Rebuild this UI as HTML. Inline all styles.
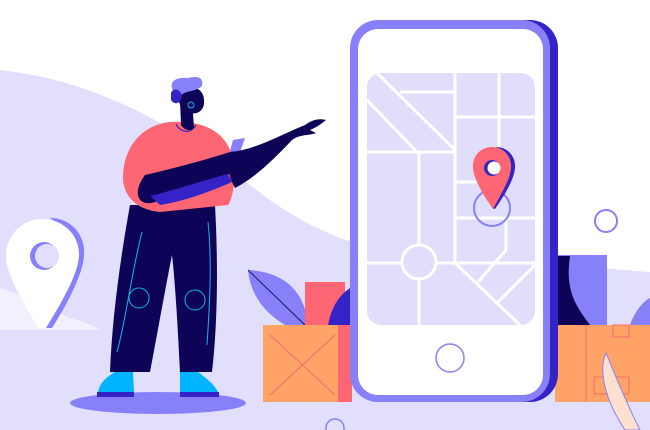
<!DOCTYPE html>
<html><head><meta charset="utf-8"><style>html,body{margin:0;padding:0;background:#fff;overflow:hidden}svg{display:block}</style></head><body>
<svg width="650" height="430" viewBox="0 0 650 430" xmlns="http://www.w3.org/2000/svg">
<rect width="650" height="430" fill="#fff"/>
<path d="M0 70 C90 80 170 120 250 185 C300 225 340 240 380 250 L650 272 L650 430 L0 430 Z" fill="#e1dffb"/>
<!-- left pin -->
<path d="M0 288 C30 298 60 312 70 318 C85 322 95 326 100 330 L0 330 Z" fill="#f1f0fd"/>
<path d="M50 218 C72 218 86 236 84 256 C83 272 70 300 52 328 L44 328 C60 300 72 272 72 256 C72 240 62 226 50 218 Z" fill="#8780f8"/>
<path d="M42 219 C64 219 80 236 79 256 C78 274 62 302 46 328 L38 328 C22 300 6 274 6 256 C6 236 22 219 42 219 Z" fill="#fff"/>
<circle cx="44" cy="256" r="14" fill="#8780f8"/><circle cx="47" cy="256" r="12" fill="#e1dffb"/>
<!-- leaf & boxes left -->
<path d="M248 270 C285 272 305 292 308 325 L285 325 C260 310 250 290 248 270 Z" fill="#8780f8"/>
<line x1="248" y1="270" x2="305" y2="325" stroke="#1c1660" stroke-width="1"/>
<rect x="305" y="282" width="40" height="44" fill="#ff6673"/>
<path d="M328 325 C332 305 340 295 350 288 L350 325 Z" fill="#3424c8"/>
<rect x="263" y="325" width="80" height="77" fill="#ffa466"/>
<path d="M270 335 L335 395 M335 335 L270 395" stroke="#ff6673" stroke-width="1"/>
<rect x="338" y="325" width="14" height="77" fill="#ff6673"/>
<!-- right side plants & box -->
<rect x="555" y="255" width="52" height="72" fill="#8780f8"/>
<path d="M555 256 L570 256 C565 290 575 305 590 325 L555 325 Z" fill="#0d0457"/>
<path d="M630 325 C635 310 645 300 650 298 L650 325 Z" fill="#8780f8"/>
<rect x="555" y="325" width="95" height="77" fill="#ffa466"/>
<line x1="586" y1="325" x2="586" y2="402" stroke="#ff6673" stroke-width="1"/>
<rect x="613" y="325" width="16" height="12" fill="none" stroke="#ff6673" stroke-width="1"/>
<rect x="594" y="377" width="35" height="17" fill="none" stroke="#ff6673" stroke-width="1"/>
<path d="M606 353 C598 370 605 400 625 430 L640 430 C625 400 615 375 606 353 Z" fill="#fde0d0" stroke="#8780f8" stroke-width="1"/>
<circle cx="606" cy="221" r="11" fill="none" stroke="#8780f8" stroke-width="2"/>
<!-- phone -->
<rect x="354" y="20" width="204" height="382" rx="28" fill="#3424c8"/>
<rect x="350" y="20" width="200" height="382" rx="28" fill="#8780f8"/>
<rect x="358" y="29" width="185" height="366" rx="20" fill="#fff"/>
<rect x="367" y="73" width="168" height="252" rx="14" fill="#e0defb"/>
<g stroke="#fff" stroke-width="3" fill="none">
<path d="M455 73 V263"/>
<path d="M499 73 V182"/>
<path d="M455 117 H535"/>
<path d="M400 92 H455"/>
<path d="M377 73 L455 150"/>
<path d="M367 100 L417 152"/>
<path d="M367 152 H455"/>
<path d="M419 152 V325"/>
<path d="M455 182 H499"/>
<path d="M455 218 H535"/>
<path d="M506 218 V250 L478 282"/>
<path d="M535 265 L497 303"/>
<path d="M367 263 H535"/>
<path d="M455 263 L520 325"/>
</g>
<circle cx="419" cy="262" r="17" fill="#e0defb" stroke="#fff" stroke-width="3"/>
<circle cx="492" cy="208" r="18" fill="none" stroke="#8780f8" stroke-width="2"/>
<path d="M496 147 C508 147 516 157 515 168 C514 180 504 196 495 209 L492 208 C500 194 508 180 508 168 Z" fill="#3424c8"/>
<path d="M492 147 C504 147 512 157 511 168 C510 180 500 196 493 209 C484 196 474 180 473 168 C472 157 480 147 492 147 Z" fill="#ff6673"/>
<circle cx="492" cy="168" r="8" fill="#3424c8"/><circle cx="494" cy="168" r="6.5" fill="#fff"/>
<circle cx="450" cy="358" r="14" fill="none" stroke="#8780f8" stroke-width="1.5"/>
<circle cx="335" cy="428" r="9" fill="none" stroke="#8780f8" stroke-width="1.5"/>
<!-- person -->
<ellipse cx="158" cy="403" rx="88" ry="11" fill="#8780f8"/>
<path d="M130 205 L215 205 C218 260 218 320 212 372 L180 372 C178 330 175 280 172 255 C165 290 158 330 150 372 L110 372 C112 320 120 260 130 205 Z" fill="#0d0457"/>
<path d="M142 232 C132 270 126 320 117 352 M208 222 C212 260 210 300 207 345" stroke="#16b5e8" stroke-width="1" fill="none"/>
<circle cx="139" cy="298" r="10" fill="none" stroke="#16b5e8" stroke-width="1"/>
<circle cx="195" cy="300" r="10" fill="none" stroke="#16b5e8" stroke-width="1"/>
<path d="M115 372 L133 372 L134 392 L98 392 C100 382 108 376 115 372 Z" fill="#00b4ff"/>
<rect x="97" y="392" width="37" height="5" fill="#3424c8"/>
<path d="M180 372 L198 372 C206 378 214 384 218 392 L180 392 Z" fill="#00b4ff"/>
<rect x="180" y="392" width="39" height="5" fill="#3424c8"/>
<path d="M170 122 C200 120 222 130 230 150 C236 170 235 195 228 205 L160 212 C140 210 125 200 123 180 C122 150 140 125 170 122 Z" fill="#ff6673"/>
<path d="M176 124 C180 132 190 135 196 125" stroke="#3424c8" stroke-width="1.2" fill="none"/>
<path d="M180 100 L192 100 L194 128 C190 132 184 130 181 125 Z" fill="#0d0457"/>
<path d="M180 86 C190 84 204 88 204 100 C205 110 198 115 190 113 C182 112 176 104 180 86 Z" fill="#0d0457"/>
<path d="M172 88 C170 80 178 77 188 78 C196 76 204 76 202 86 C196 92 186 90 180 96 C178 100 174 98 172 88 Z" fill="#8780f8"/>
<path d="M171 93 C173 88 180 88 182 96 C181 103 175 106 171 100 Z" fill="#3424c8"/>
<circle cx="191" cy="105" r="3" fill="none" stroke="#16b5e8" stroke-width="1"/>
<path d="M233 140 L245 138 L238 158 L228 158 Z" fill="#8780f8"/>
<path d="M145 175 C175 168 205 160 230 152 C240 150 245 160 240 168 C225 178 195 188 160 200 C140 210 130 195 145 175 Z" fill="#0d0457"/>
<path d="M150 196 C175 190 205 180 228 174 L232 182 C205 194 180 202 160 205 Z" fill="#3424c8"/>
<path d="M230 152 C255 150 280 135 305 125 C312 120 318 118 326 120 C320 125 315 128 310 130 L316 133 C308 136 300 134 292 140 C275 158 255 178 235 188 C228 175 226 162 230 152 Z" fill="#0d0457"/>
</svg>
</body></html>
